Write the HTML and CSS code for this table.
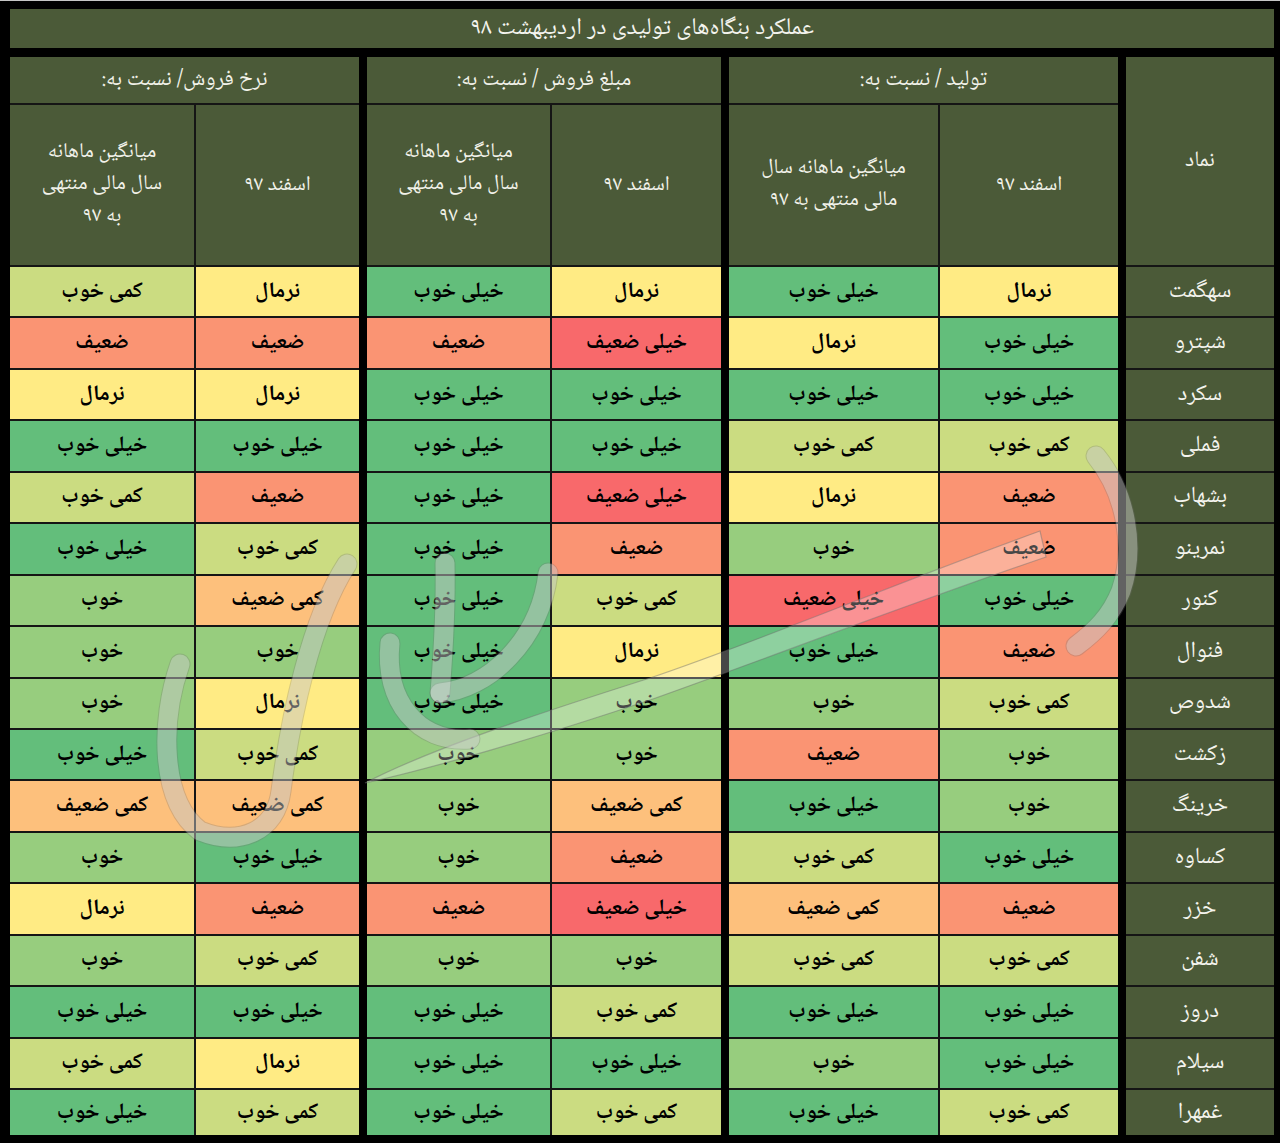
FILE: index.html
```html
<!DOCTYPE html>
<html lang="fa" dir="rtl">
<head>
<meta charset="utf-8">
<title>عملکرد بنگاه‌های تولیدی در اردیبهشت ۹۸</title>
<link rel="stylesheet" href="styles.css">
</head>
<body>
<div class="page">
  <div class="title">عملکرد بنگاه‌های تولیدی در اردیبهشت ۹۸</div>
  <div class="grid">
    <div class="sep sep1"></div>
    <div class="sep sep2"></div>
    <div class="sep sep3"></div>

    <div class="hd symhead">نماد</div>
    <div class="hd group">تولید / نسبت به:</div>
    <div class="hd group">مبلغ فروش / نسبت به:</div>
    <div class="hd group">نرخ فروش/ نسبت به:</div>

    <div class="hd sub">اسفند ۹۷</div>
    <div class="hd sub"><span class="ln">میانگین ماهانه سال</span><span class="ln">مالی منتهی به ۹۷</span></div>
    <div class="hd sub">اسفند ۹۷</div>
    <div class="hd sub"><span class="ln">میانگین ماهانه</span><span class="ln">سال مالی منتهی</span><span class="ln">به ۹۷</span></div>
    <div class="hd sub">اسفند ۹۷</div>
    <div class="hd sub"><span class="ln">میانگین ماهانه</span><span class="ln">سال مالی منتهی</span><span class="ln">به ۹۷</span></div>

    <div class="sym">سهگمت</div><div class="c n">نرمال</div><div class="c vg">خیلی خوب</div><div class="c n">نرمال</div><div class="c vg">خیلی خوب</div><div class="c n">نرمال</div><div class="c sg">کمی خوب</div>
    <div class="sym">شپترو</div><div class="c vg">خیلی خوب</div><div class="c n">نرمال</div><div class="c vw">خیلی ضعیف</div><div class="c w">ضعیف</div><div class="c w">ضعیف</div><div class="c w">ضعیف</div>
    <div class="sym">سکرد</div><div class="c vg">خیلی خوب</div><div class="c vg">خیلی خوب</div><div class="c vg">خیلی خوب</div><div class="c vg">خیلی خوب</div><div class="c n">نرمال</div><div class="c n">نرمال</div>
    <div class="sym">فملی</div><div class="c sg">کمی خوب</div><div class="c sg">کمی خوب</div><div class="c vg">خیلی خوب</div><div class="c vg">خیلی خوب</div><div class="c vg">خیلی خوب</div><div class="c vg">خیلی خوب</div>
    <div class="sym">بشهاب</div><div class="c w">ضعیف</div><div class="c n">نرمال</div><div class="c vw">خیلی ضعیف</div><div class="c vg">خیلی خوب</div><div class="c w">ضعیف</div><div class="c sg">کمی خوب</div>
    <div class="sym">نمرینو</div><div class="c w">ضعیف</div><div class="c g">خوب</div><div class="c w">ضعیف</div><div class="c vg">خیلی خوب</div><div class="c sg">کمی خوب</div><div class="c vg">خیلی خوب</div>
    <div class="sym">کنور</div><div class="c vg">خیلی خوب</div><div class="c vw">خیلی ضعیف</div><div class="c sg">کمی خوب</div><div class="c vg">خیلی خوب</div><div class="c sw">کمی ضعیف</div><div class="c g">خوب</div>
    <div class="sym">فنوال</div><div class="c w">ضعیف</div><div class="c vg">خیلی خوب</div><div class="c n">نرمال</div><div class="c vg">خیلی خوب</div><div class="c g">خوب</div><div class="c g">خوب</div>
    <div class="sym">شدوص</div><div class="c sg">کمی خوب</div><div class="c g">خوب</div><div class="c g">خوب</div><div class="c vg">خیلی خوب</div><div class="c n">نرمال</div><div class="c g">خوب</div>
    <div class="sym">زکشت</div><div class="c g">خوب</div><div class="c w">ضعیف</div><div class="c g">خوب</div><div class="c g">خوب</div><div class="c sg">کمی خوب</div><div class="c vg">خیلی خوب</div>
    <div class="sym">خرینگ</div><div class="c g">خوب</div><div class="c vg">خیلی خوب</div><div class="c sw">کمی ضعیف</div><div class="c g">خوب</div><div class="c sw">کمی ضعیف</div><div class="c sw">کمی ضعیف</div>
    <div class="sym">کساوه</div><div class="c vg">خیلی خوب</div><div class="c sg">کمی خوب</div><div class="c w">ضعیف</div><div class="c g">خوب</div><div class="c vg">خیلی خوب</div><div class="c g">خوب</div>
    <div class="sym">خزر</div><div class="c w">ضعیف</div><div class="c sw">کمی ضعیف</div><div class="c vw">خیلی ضعیف</div><div class="c w">ضعیف</div><div class="c w">ضعیف</div><div class="c n">نرمال</div>
    <div class="sym">شفن</div><div class="c sg">کمی خوب</div><div class="c sg">کمی خوب</div><div class="c g">خوب</div><div class="c g">خوب</div><div class="c sg">کمی خوب</div><div class="c g">خوب</div>
    <div class="sym">دروز</div><div class="c vg">خیلی خوب</div><div class="c vg">خیلی خوب</div><div class="c sg">کمی خوب</div><div class="c vg">خیلی خوب</div><div class="c vg">خیلی خوب</div><div class="c vg">خیلی خوب</div>
    <div class="sym">سیلام</div><div class="c vg">خیلی خوب</div><div class="c g">خوب</div><div class="c vg">خیلی خوب</div><div class="c vg">خیلی خوب</div><div class="c n">نرمال</div><div class="c sg">کمی خوب</div>
    <div class="sym">غمهرا</div><div class="c sg">کمی خوب</div><div class="c vg">خیلی خوب</div><div class="c sg">کمی خوب</div><div class="c vg">خیلی خوب</div><div class="c sg">کمی خوب</div><div class="c vg">خیلی خوب</div>
  </div>

  <svg class="watermark" width="1280" height="1143" viewBox="0 0 1280 1143" aria-hidden="true">
    <g class="wm-fill">
      <path d="M365,782 C430,748 540,712 650,677 C760,640 880,588 1040,530 L1046,556 C900,606 760,660 650,699 C540,736 430,768 365,782 Z"/>
    </g>
    <g class="wm-edge">
      <path d="M1096,455 C1126,492 1136,546 1121,590 C1111,615 1096,630 1076,645"/>
      <path d="M180,663 C160,720 160,800 200,830 C240,846 276,830 281,790 C290,720 310,620 347,563"/>
      <path d="M445,562 C446,610 443,655 440,692"/>
      <path d="M548,572 C540,640 488,688 440,692"/>
      <path d="M390,642 C384,700 418,742 470,738"/>
    </g>
    <g class="wm-stroke">
      <path d="M1096,455 C1126,492 1136,546 1121,590 C1111,615 1096,630 1076,645"/>
      <path d="M180,663 C160,720 160,800 200,830 C240,846 276,830 281,790 C290,720 310,620 347,563"/>
      <path d="M445,562 C446,610 443,655 440,692"/>
      <path d="M548,572 C540,640 488,688 440,692"/>
      <path d="M390,642 C384,700 418,742 470,738"/>
    </g>
  </svg>
</div>
</body>
</html>
```

FILE: styles.css
```css
html, body {
  margin: 0;
  padding: 0;
}

body {
  background: #000;
  width: 1280px;
  height: 1143px;
  overflow: hidden;
  font-family: "Noto Naskh Arabic", "Noto Sans Arabic", "DejaVu Sans", sans-serif;
}

.page {
  position: relative;
  box-sizing: border-box;
  width: 1280px;
  height: 1143px;
  border-top: 1px solid #c6c6c6;
  padding: 8px 6px 0 10px;
  background: #000;
}

.title {
  height: 39px;
  margin-bottom: 9px;
  background: #4b5a38;
  color: #f4f4ee;
  font-size: 24px;
  line-height: 39px;
  display: flex;
  align-items: center;
  justify-content: center;
}

.grid {
  display: grid;
  direction: rtl;
  grid-template-columns: 148px 4px 178px 209px 4px 169px 183px 4px 163px 184px;
  grid-template-rows: 46px 160px repeat(16, 49.44px) 45px;
  gap: 2px;
  background: #151515;
}

.sep {
  background: #000;
  grid-row: 1 / -1;
  margin: 0 -2px;
}
.sep1 { grid-column: 2; }
.sep2 { grid-column: 5; }
.sep3 { grid-column: 8; }

.hd {
  background: #4b5a38;
  color: #f2f2ea;
  font-size: 22px;
  display: flex;
  align-items: center;
  justify-content: center;
  text-align: center;
}

.symhead {
  grid-row: span 2;
}

.group {
  grid-column: span 2;
}

.sub {
  flex-direction: column;
  font-size: 21px;
}

.ln {
  display: block;
  height: 32px;
  line-height: 32px;
  white-space: nowrap;
}

.sym {
  background: #4b5a38;
  color: #f4f4ee;
  font-size: 23px;
  display: flex;
  align-items: center;
  justify-content: center;
}

.c {
  color: #000;
  font-weight: bold;
  font-size: 22px;
  display: flex;
  align-items: center;
  justify-content: center;
}

.vg { background: #63be7b; }
.g  { background: #97cd7e; }
.sg { background: #cbdc81; }
.n  { background: #ffeb84; }
.sw { background: #fdc07c; }
.w  { background: #fa9473; }
.vw { background: #f8696b; }

.watermark {
  position: absolute;
  top: 0;
  left: 0;
  pointer-events: none;
}

.wm-fill path {
  fill: rgba(255, 255, 255, 0.28);
  stroke: rgba(110, 110, 110, 0.45);
  stroke-width: 1.2;
}

.wm-edge path {
  fill: none;
  stroke: rgba(110, 110, 110, 0.28);
  stroke-width: 21;
  stroke-linecap: round;
}

.wm-stroke path {
  fill: none;
  stroke: rgba(255, 255, 255, 0.3);
  stroke-width: 19;
  stroke-linecap: round;
}
```
